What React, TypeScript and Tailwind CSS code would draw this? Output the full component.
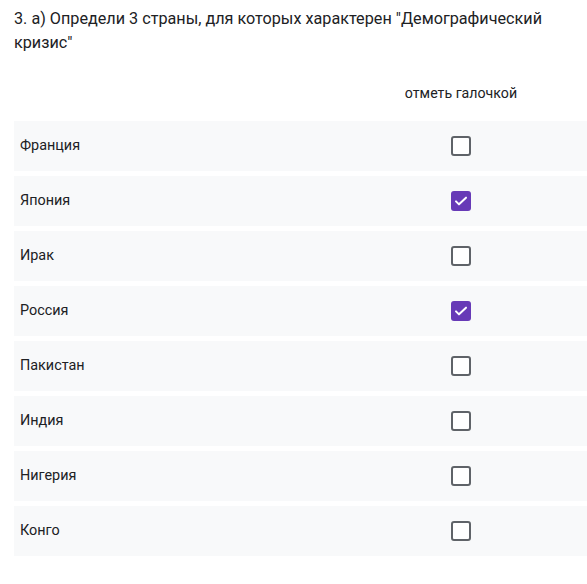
import React from 'react';

const countries = [
  { name: 'Франция', checked: false },
  { name: 'Япония', checked: true },
  { name: 'Ирак', checked: false },
  { name: 'Россия', checked: true },
  { name: 'Пакистан', checked: false },
  { name: 'Индия', checked: false },
  { name: 'Нигерия', checked: false },
  { name: 'Конго', checked: false },
];

const Checkbox: React.FC<{ checked: boolean }> = ({ checked }) =>
  checked ? (
    <div className="w-5 h-5 rounded-[3px] bg-[#673ab7] flex items-center justify-center">
      <svg width="16" height="16" viewBox="0 0 24 24" fill="none">
        <path d="M4.5 12.5l4.5 4.5L19.5 7" stroke="white" strokeWidth="3" strokeLinecap="round" strokeLinejoin="round" />
      </svg>
    </div>
  ) : (
    <div className="w-5 h-5 rounded-[3px] border-2 border-[#5f6368] bg-white" />
  );

export default function App() {
  return (
    <div className="min-h-screen bg-white text-[#202124] font-['Roboto',sans-serif] pl-[14px] pt-[7px]">
      <h1 className="text-[16.2px] leading-[24px] pr-4">
        3. а) Определи 3 страны, для которых характерен "Демографический кризис"
      </h1>
      <div className="grid grid-cols-[1fr_252px] mt-[19px] h-[40px] items-center">
        <div />
        <div className="text-[14.2px] text-center">отметь галочкой</div>
      </div>
      <div className="flex flex-col gap-[5px] mt-[7px]">
        {countries.map((c) => (
          <div key={c.name} className="grid grid-cols-[1fr_252px] h-[50px] items-center bg-[#f8f9fa]">
            <div className="pl-[6px] text-[14.4px]">{c.name}</div>
            <div className="flex justify-center">
              <Checkbox checked={c.checked} />
            </div>
          </div>
        ))}
      </div>
    </div>
  );
}
